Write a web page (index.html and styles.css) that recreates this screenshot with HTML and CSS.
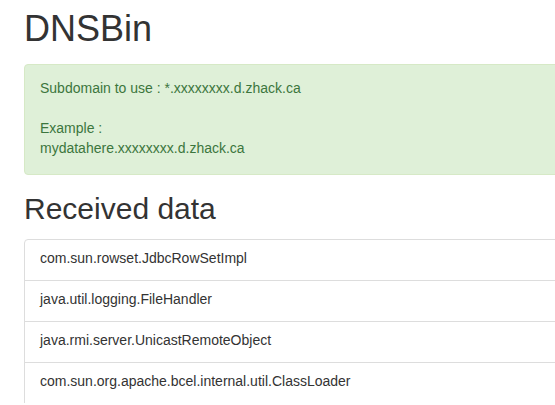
FILE: index.html
```html
<!DOCTYPE html>
<html>
<head>
<meta charset="utf-8">
<link rel="stylesheet" href="styles.css">
</head>
<body>
<div class="container">
  <h1 class="title">DNSBin</h1>
  <div class="alert">
    Subdomain to use : *.xxxxxxxx.d.zhack.ca<br><br>
    Example :<br>
    mydatahere.xxxxxxxx.d.zhack.ca
  </div>
  <h2 class="subtitle">Received data</h2>
  <ul class="list-group">
    <li class="list-item">com.sun.rowset.JdbcRowSetImpl</li>
    <li class="list-item">java.util.logging.FileHandler</li>
    <li class="list-item">java.rmi.server.UnicastRemoteObject</li>
    <li class="list-item">com.sun.org.apache.bcel.internal.util.ClassLoader</li>
  </ul>
</div>
</body>
</html>
```

FILE: styles.css
```css
html, body {
  margin: 0;
  padding: 0;
  overflow: hidden;
  background: #fff;
}
body {
  font-family: "Liberation Sans", Arial, sans-serif;
  font-size: 14px;
  line-height: 20px;
  color: #333;
}
.container {
  width: 740px;
  padding-left: 24px;
}
.title {
  font-size: 36px;
  font-weight: 500;
  line-height: 1.1;
  margin: 9px 0 15px;
}
.alert {
  background: #dff0d8;
  border: 1px solid #d6e9c6;
  color: #3c763d;
  border-radius: 4px;
  padding: 13px 15px 16px;
  margin-bottom: 17px;
}
.subtitle {
  font-size: 30px;
  font-weight: 500;
  line-height: 1.1;
  margin: 0 0 14px;
}
.list-group {
  list-style: none;
  margin: 0;
  padding: 0;
}
.list-item {
  border: 1px solid #ddd;
  padding: 8px 15px 12px;
  margin-bottom: -1px;
}
.list-item:first-child {
  border-top-left-radius: 4px;
}
```
